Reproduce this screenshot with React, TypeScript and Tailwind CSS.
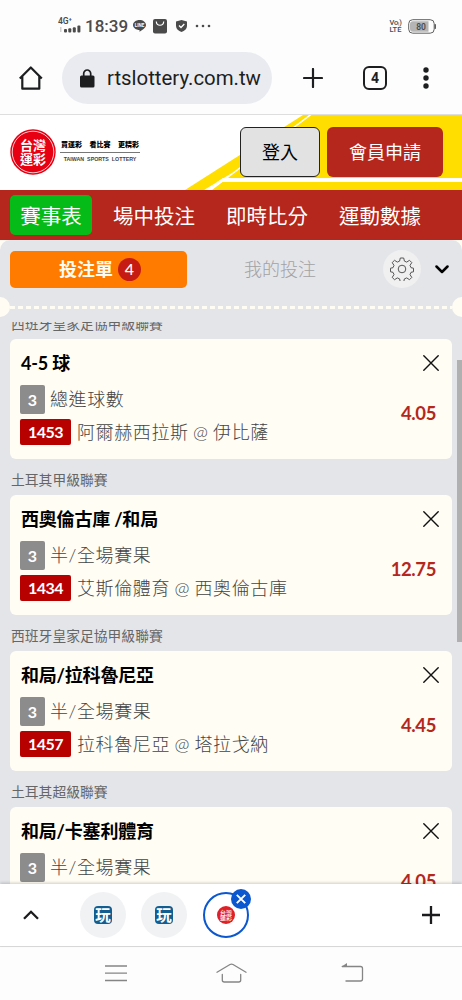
type Bet = {
  league: string;
  title: string;
  type: string;
  code: string;
  match: string;
  odds: string;
};

const bets: Bet[] = [
  {
    league: "西班牙皇家足協甲級聯賽",
    title: "4-5 球",
    type: "總進球數",
    code: "1453",
    match: "阿爾赫西拉斯 @ 伊比薩",
    odds: "4.05",
  },
  {
    league: "土耳其甲級聯賽",
    title: "西奧倫古庫 /和局",
    type: "半/全場賽果",
    code: "1434",
    match: "艾斯倫體育 @ 西奧倫古庫",
    odds: "12.75",
  },
  {
    league: "西班牙皇家足協甲級聯賽",
    title: "和局/拉科魯尼亞",
    type: "半/全場賽果",
    code: "1457",
    match: "拉科魯尼亞 @ 塔拉戈納",
    odds: "4.45",
  },
  {
    league: "土耳其超級聯賽",
    title: "和局/卡塞利體育",
    type: "半/全場賽果",
    code: "",
    match: "",
    odds: "4.05",
  },
];

const StatusBar = () => {
  return (
    <div className="flex h-[52px] items-center pr-[26px] pl-[58px] font-[Roboto,sans-serif] text-[#4b4b4b]">
      <svg className="h-5 w-6 shrink-0" viewBox="0 0 24 20" fill="#4b4b4b">
        <text x="0" y="7.500" fontSize="8.500" fontWeight="600" textLength="14">
          4G⁺
        </text>
        <path d="M2 11h1.500v5H2z" opacity=".25" />
        <rect x="6" y="13" width="3" height="3.500" rx="1" />
        <rect x="10.300" y="12.200" width="3" height="4.300" rx="1" />
        <rect x="14.800" y="11.200" width="3" height="5.300" rx="1" />
        <rect x="19.400" y="9.500" width="3" height="7" rx="1" />
      </svg>
      <span className="ml-[3px] w-[42px] text-[17px] leading-5 font-medium whitespace-nowrap">18:39</span>
      <svg className="ml-[6px] h-3 w-[13px]" viewBox="0 0 13 12">
        <path d="M6.500 0C10 0 13 2.100 13 5c0 2.700-3.500 4.800-6.500 6.800V10C3 10 0 7.800 0 5s3-5 6.500-5z" fill="#4b4b4b" />
        <text x="6.500" y="6.900" fontSize="4.500" fontWeight="700" textAnchor="middle" fill="#fff">
          LINE
        </text>
      </svg>
      <svg className="ml-[7px] h-[15px] w-[14px]" viewBox="0 0 14 15" fill="none">
        <rect width="14" height="14.500" rx="2" fill="#4b4b4b" />
        <path d="M3.300 2.500c.3 5 7.100 5 7.400 0" stroke="#fff" strokeWidth="1.200" />
      </svg>
      <svg className="ml-[9px] h-3 w-[11px]" viewBox="0 0 11 12" fill="none">
        <path d="M5.500 0 11 1.500V6c0 3-2.500 5-5.500 6C2.500 11 0 9 0 6V1.500z" fill="#4b4b4b" />
        <path d="m3 5.500 2 2 3.300-3.500" stroke="#fff" strokeWidth="1.300" />
      </svg>
      <svg className="ml-2 h-1 w-4" viewBox="0 0 16 4" fill="#4b4b4b">
        <circle cx="2" cy="2" r="1.300" />
        <circle cx="8" cy="2" r="1.300" />
        <circle cx="14" cy="2" r="1.300" />
      </svg>
      <div className="ml-auto flex flex-col text-[7.5px] leading-[7px] font-medium">
        <span>Voₗ)</span>
        <span>LTE</span>
      </div>
      <svg className="ml-[6px] h-[15px] w-[28px]" viewBox="0 0 28 15" fill="none">
        <rect x=".7" y=".7" width="25.500" height="13.500" rx="4" stroke="#5f5f5f" />
        <path d="M5 2.200h15.500v10.500H5a3 3 0 0 1-3-3V5a3 3 0 0 1 3-2.800z" fill="#b5b5b5" />
        <rect x="26.500" y="5" width="1.500" height="5" rx=".7" fill="#5f5f5f" />
        <text x="13" y="10.500" fontSize="8.500" fontWeight="600" textAnchor="middle" fill="#4b4b4b">
          80
        </text>
      </svg>
    </div>
  );
};

const BrowserBar = () => {
  return (
    <div className="flex h-[63px] items-start border-b border-[#dedede] pl-[19px] font-[Roboto,sans-serif] text-[#1d1e20]">
      <svg className="mt-[14px] h-6 w-6" viewBox="0 0 24 24" fill="none" stroke="currentColor" strokeWidth="2.200" strokeLinejoin="round">
        <path d="m.8 12.500 11-11 11 11M3.300 10.500v12.200h17V10.500" />
      </svg>
      <div className="ml-[19px] flex h-[52px] w-[210px] items-center rounded-full bg-[#eaebf0] pl-[18px]">
        <svg className="h-[19px] w-[15px]" viewBox="0 0 15 19">
          <rect y="6.500" width="14.500" height="12" rx="1.500" fill="currentColor" />
          <path d="M3.700 7V4.500a3.500 3.500 0 0 1 7 0V7" fill="none" stroke="currentColor" strokeWidth="1.700" />
        </svg>
        <span className="ml-3 text-[20.4px] whitespace-nowrap">rtslottery.com.tw</span>
      </div>
      <svg className="mt-4 ml-[31px] h-5 w-5" viewBox="0 0 20 20" stroke="currentColor" strokeWidth="2.200" strokeLinecap="round">
        <path d="M10 1v18M1 10h18" />
      </svg>
      <div className="mt-[14px] ml-10 flex h-6 w-[24px] items-center justify-center rounded-[6px] border-[2.3px] border-[#1d1e20] text-[14px] font-bold">
        4
      </div>
      <svg className="mt-[15px] ml-9 h-[22px] w-[6px]" viewBox="0 0 6 22" fill="currentColor">
        <circle cx="3" cy="3" r="2.700" />
        <circle cx="3" cy="11" r="2.700" />
        <circle cx="3" cy="19" r="2.700" />
      </svg>
    </div>
  );
};

const Seal = () => {
  return (
    <svg className="h-[46px] w-[46px] shrink-0" viewBox="0 0 46 46">
      <circle cx="23" cy="23" r="22.700" fill="#e60012" />
      <circle cx="23" cy="23" r="20.800" fill="none" stroke="#fff" strokeWidth=".8" />
      <g fill="#fff" fontSize="13" fontWeight="700" textAnchor="middle">
        <text x="23" y="21">
          台灣
        </text>
        <text x="23" y="35">
          運彩
        </text>
      </g>
    </svg>
  );
};

const SiteHeader = () => {
  return (
    <header className="relative h-[75px] overflow-hidden bg-white">
      <svg className="absolute inset-0 h-full w-full" viewBox="0 0 462 75">
        <path d="M303 0h159v75H185z" fill="#ffde00" />
        <path d="M309 0h2.500L212 75h-8L232 58z" fill="#fff" />
        <path d="M223 63h239v4H217z" fill="#fff" />
      </svg>
      <div className="relative flex h-full items-start pl-[10px]">
        <div className="mt-[14px]">
          <Seal />
        </div>
        <div className="mt-[24px] ml-1 flex w-[80px] flex-col items-center">
          <div className="flex w-full justify-between border-b border-[#777] px-[1px] pb-[2px] text-[7px] leading-[11px] font-black text-black">
            <span>買運彩</span>
            <span>看比賽</span>
            <span>更精彩</span>
          </div>
          <span className="mt-[2px] font-[Liberation_Sans,sans-serif] text-[5.3px] leading-[8px] font-bold whitespace-nowrap text-[#444]">
            TAIWAN&nbsp; SPORTS&nbsp; LOTTERY
          </span>
        </div>
        <button className="mt-[12px] ml-[100px] h-[50px] w-[80px] rounded-[6px] border border-[#222] bg-[#e2e2e2] pt-px text-[18px] text-black">
          登入
        </button>
        <button className="mt-[12px] ml-[7px] h-[50px] w-[116px] rounded-[6px] bg-[#b5271d] pt-px text-[18px] text-white">
          會員申請
        </button>
      </div>
    </header>
  );
};

const SiteNav = () => {
  return (
    <nav className="flex h-[50px] items-center gap-[32px] bg-[#b5261c] pl-[10px] text-[20.5px] whitespace-nowrap text-white">
      <span className="-mr-[11px] flex h-10 w-[82px] items-center justify-center rounded-[5px] bg-[#05bb17] pt-[2px]">賽事表</span>
      <span className="w-[81px] pt-[2px]">場中投注</span>
      <span className="w-[81px] pt-[2px]">即時比分</span>
      <span className="pt-[2px]">運動數據</span>
    </nav>
  );
};

const SlipTabs = () => {
  return (
    <div className="flex h-[57px] items-center pt-px pl-[10px]">
      <div className="flex h-[37px] w-[177px] items-center justify-center rounded-[5px] bg-[#ff7b00] pl-[3px] text-[18px] font-bold text-[#fffdf2]">
        投注單
        <span className="ml-[5px] flex h-[23px] w-[23px] items-center justify-center rounded-full bg-[#c51b12] font-[Lato,sans-serif] text-[16px] font-medium">
          4
        </span>
      </div>
      <span className="ml-[57px] w-[71px] text-[18px] font-light whitespace-nowrap text-[#a2a2a5]">我的投注</span>
      <div className="ml-[68px] flex h-[38px] w-[38px] items-center justify-center rounded-full bg-[#f0f0f0]">
        <svg className="h-6 w-6" viewBox="0 0 24 24" fill="none" stroke="#555" strokeWidth="1">
          <circle cx="12" cy="12" r="3.800" />
          <path
            strokeLinejoin="round"
            d="M10.300 1h3.400l.7 3.100 2.300 1 2.800-1.800 2.300 2.300-1.800 2.800 1 2.300 2.500.5v3.600l-2.500.5-1 2.300 1.800 2.800-2.300 2.300-2.800-1.800-2.300 1-.7 3.100h-3.400l-.7-3.100-2.300-1-2.800 1.800-2.300-2.300 1.800-2.800-1-2.300-2.500-.5v-3.600l2.500-.5 1-2.300-1.800-2.800 2.300-2.300 2.800 1.800 2.300-1z"
          />
        </svg>
      </div>
      <svg className="ml-[14px] h-[9px] w-[14px]" viewBox="0 0 14 9" fill="none" stroke="#000" strokeWidth="2.500" strokeLinecap="round" strokeLinejoin="round">
        <path d="m1.500 1.500 5.500 5.500 5.500-5.500" />
      </svg>
    </div>
  );
};

// ticket-style tear line with a half circle punched out of each side
const TearLine = () => {
  return (
    <div className="-mx-[10px] flex h-5 items-center">
      <div className="h-5 w-5 shrink-0 rounded-full bg-[#fffdf3]" />
      <div className="h-[3px] flex-1 bg-[repeating-linear-gradient(90deg,#fffdf3_0_5px,transparent_5px_8px)]" />
      <div className="h-5 w-5 shrink-0 rounded-full bg-[#fffdf3]" />
    </div>
  );
};

const BetCard = ({ bet }: { bet: Bet }) => {
  return (
    <section>
      <h3 className="flex h-9 items-center pt-[6px] pl-[11px] text-[13.8px] font-normal text-[#666]">{bet.league}</h3>
      <div className="mr-[10px] ml-[10px] flex h-[120px] justify-between rounded-[6px] bg-[#fffdf4] pr-[13px] pl-[10px]">
        <div className="whitespace-nowrap">
          <div className="mt-[10px] flex h-7 items-center pl-px text-[18px] font-bold tracking-[-0.2px] text-black">{bet.title}</div>
          <div className="mt-2 flex h-[29px] items-center text-[18px] font-light tracking-[0.6px] text-[#444]">
            <span className="mr-[5px] flex h-[29px] w-[25px] items-center justify-center rounded-[2px] bg-[#8c8c8c] text-[16px] font-bold tracking-normal text-white">
              3
            </span>
            {bet.type}
          </div>
          {bet.code && (
            <div className="mt-[5px] flex h-[26px] items-center text-[18px] font-light tracking-[0.6px] text-[#444] [word-spacing:-1px]">
              <span className="mr-[6px] flex h-[26px] w-[51px] items-center justify-center rounded-[2px] bg-[#b70000] text-[16px] font-bold tracking-[-0.5px] text-white">
                {bet.code}
              </span>
              {bet.match}
            </div>
          )}
        </div>
        <div className="flex flex-col items-end">
          <svg className="mt-[16px] h-4 w-4" viewBox="0 0 16 16" stroke="#111" strokeWidth="1.400" strokeLinecap="round">
            <path d="m.8.8 14.400 14.400M15.200.8.8 15.200" />
          </svg>
          <span className="mt-[28px] mr-[3px] text-[18.5px] leading-7 font-bold tracking-[-0.4px] text-[#b5271d]">{bet.odds}</span>
        </div>
      </div>
    </section>
  );
};

const PlayIcon = () => {
  return (
    <div className="flex h-[46px] w-[46px] items-center justify-center rounded-full bg-[#f1f2f4]">
      <svg className="h-[18px] w-[18px]" viewBox="0 0 18 18">
        <rect width="18" height="18" rx="4" fill="#135e91" />
        <text x="9" y="14.500" fontSize="15.500" fontWeight="700" textAnchor="middle" fill="#fff">
          玩
        </text>
      </svg>
    </div>
  );
};

const TabStrip = () => {
  return (
    <div className="relative flex h-[62px] items-center bg-white pl-[23px] shadow-[0_-1px_3px_rgba(0,0,0,0.2)]">
      <svg className="h-[10px] w-4" viewBox="0 0 16 10" fill="none" stroke="#1b1b1d" strokeWidth="2.300">
        <path d="m1 8.800 7-7 7 7" />
      </svg>
      <div className="ml-[41px] flex gap-[15px]">
        <PlayIcon />
        <PlayIcon />
        <div className="relative ml-px flex h-[46px] w-[46px] items-center justify-center rounded-full border-[2.5px] border-[#0b57d0] bg-white">
          <svg className="h-[18px] w-[18px]" viewBox="0 0 18 18">
            <circle cx="9" cy="9" r="9" fill="#df2027" />
            <g fill="#fff" fontSize="6" fontWeight="500" textAnchor="middle">
              <text x="9" y="8.500">
                台灣
              </text>
              <text x="9" y="14.300">
                運彩
              </text>
            </g>
          </svg>
          <span className="absolute -top-[5px] -right-[4px] flex h-5 w-5 items-center justify-center rounded-full bg-[#0b57d0]">
            <svg className="h-[10px] w-[10px]" viewBox="0 0 10 10" stroke="#fff" strokeWidth="1.900">
              <path d="m.8.8 8.400 8.400M9.200.8.8 9.200" />
            </svg>
          </span>
        </div>
      </div>
      <svg className="ml-[173px] h-[18px] w-[18px]" viewBox="0 0 18 18" stroke="#1b1b1d" strokeWidth="2.300">
        <path d="M9 0v18M0 9h18" />
      </svg>
    </div>
  );
};

const SystemNav = () => {
  return (
    <div className="flex h-[54px] items-center border-t border-[#dedede] bg-[#fdfdfd] pb-[2px] pl-[105px]">
      <svg className="h-[18px] w-[22px]" viewBox="0 0 22 18" stroke="#858585" strokeWidth="1.300">
        <path d="M0 2h22M0 9.200h22M0 16.500h22" />
      </svg>
      <svg className="ml-[89px] h-5 w-[31px]" viewBox="0 0 31 20" fill="none" stroke="#858585" strokeWidth="1.300" strokeLinejoin="round" strokeLinecap="round">
        <path d="M1 9.200 14 1.500q1.500-.8 3 0L30 9.200M6.300 11.500V17q0 2 2 2h14.400q2 0 2-2v-5.500" />
      </svg>
      <svg className="ml-[94px] h-[19px] w-[23px]" viewBox="0 0 23 19" fill="none" stroke="#858585" strokeWidth="1.300">
        <path d="M1 3.500h18.500q2 0 2 2V16q0 2-2 2H4.500" />
        <path d="M0 4 6 0v4z" fill="#858585" stroke="none" />
      </svg>
    </div>
  );
};

const App = () => {
  return (
    <div className="flex h-[1000px] w-[462px] flex-col overflow-hidden bg-[#fdfdfd] font-[Lato,'Noto_Sans_CJK_TC',sans-serif]">
      <StatusBar />
      <BrowserBar />
      <SiteHeader />
      <SiteNav />
      <main className="min-h-0 flex-1 bg-[#fffdf3]">
        <div className="flex h-full flex-col overflow-hidden rounded-t-[10px] bg-[#e4e5e9]">
          <SlipTabs />
          <TearLine />
          <div className="relative mt-[5px] min-h-0 flex-1 overflow-hidden">
            <div className="-mt-[19px]">
              {bets.map((bet) => (
                <BetCard key={bet.title} bet={bet} />
              ))}
            </div>
            <div className="absolute top-[38px] right-0 h-[282px] w-[5px] bg-[#b0b0b1]" />
          </div>
        </div>
      </main>
      <TabStrip />
      <SystemNav />
    </div>
  );
};

export default App;
